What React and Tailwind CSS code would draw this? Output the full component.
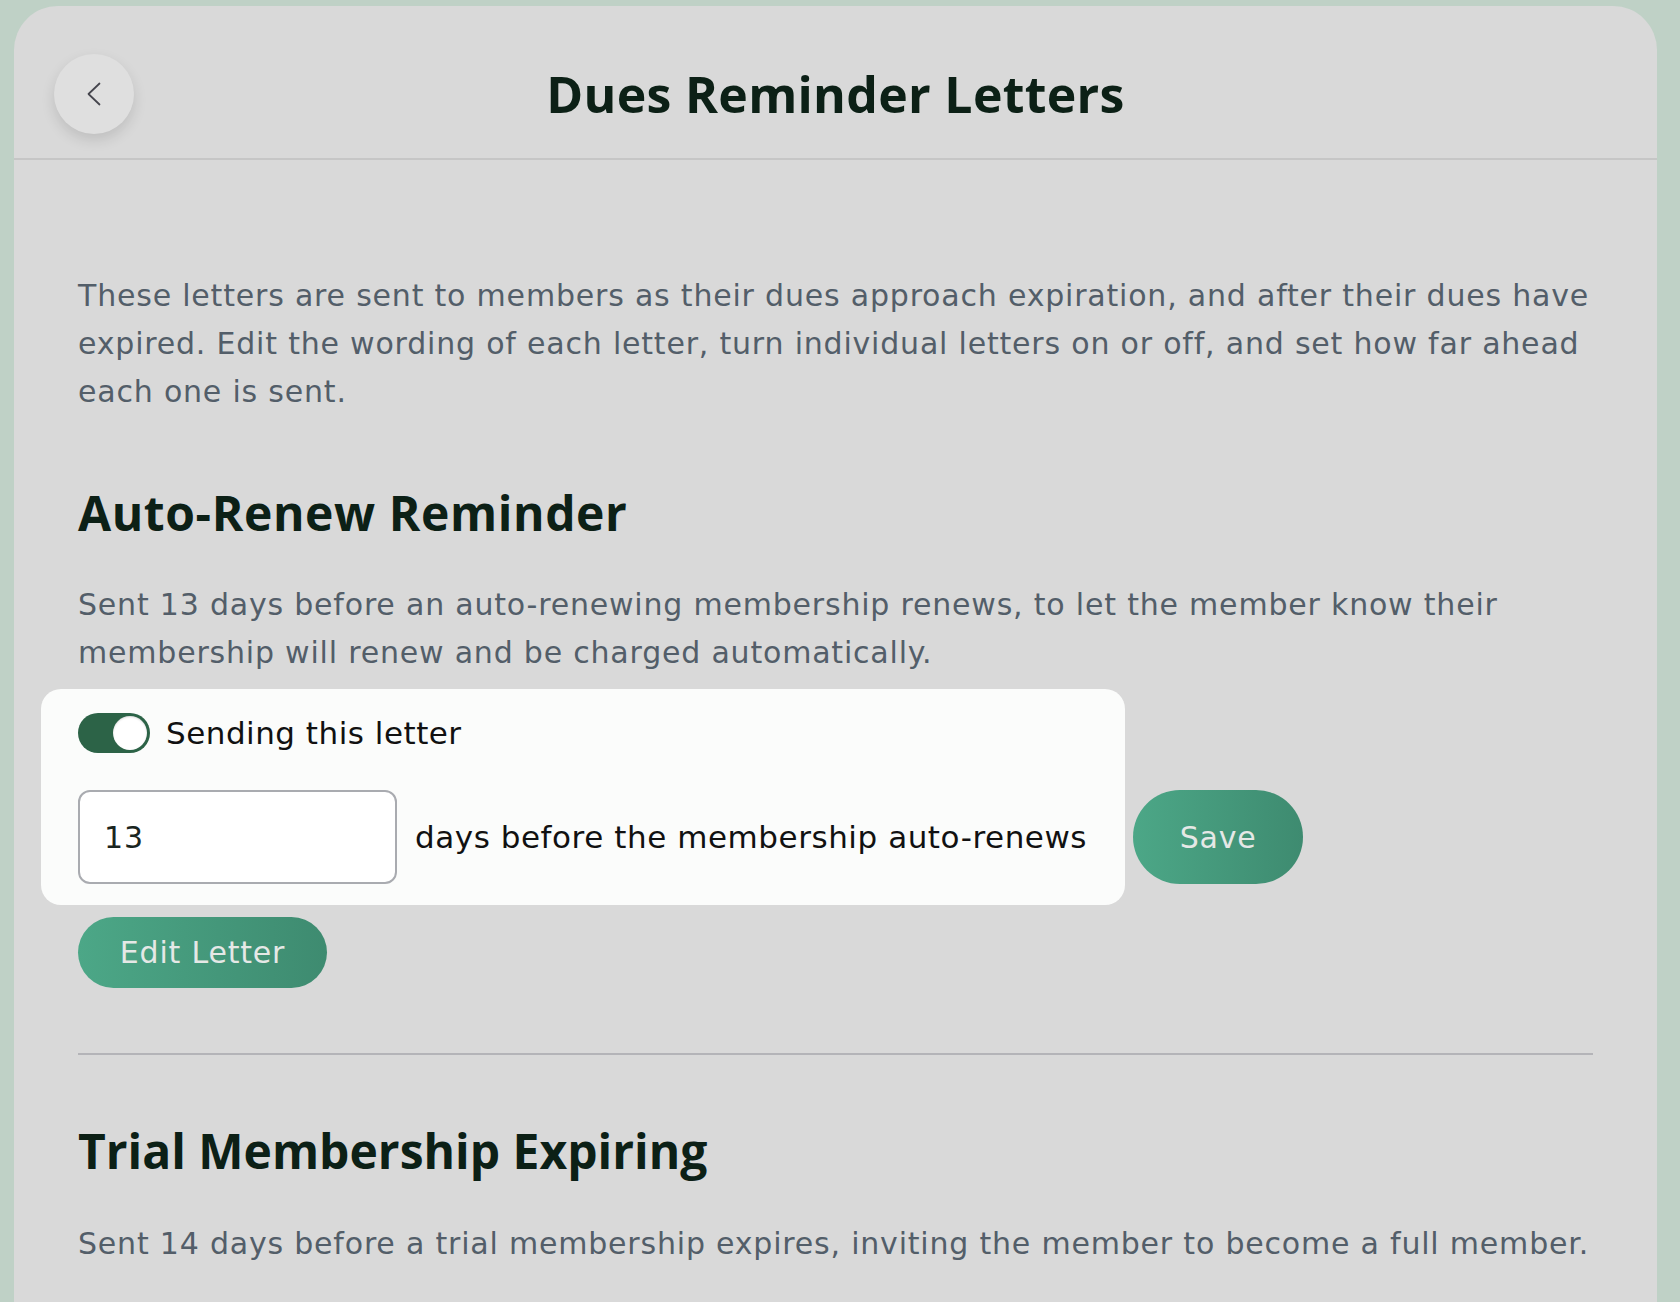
import { useState } from "react";

function Toggle({ on, onChange }) {
    return (
        <button
            type="button"
            onClick={() => onChange(!on)}
            className={`flex h-[40px] w-[72px] items-center rounded-full p-[3px] ${on ? "justify-end bg-[#2c6347]" : "justify-start bg-[#a9abb0]"}`}
        >
            <span className="h-[34px] w-[34px] rounded-full bg-white shadow-[inset_0_1px_2px_rgba(0,0,0,0.15)]" />
        </button>
    );
}

const body = "[font-family:'DejaVu_Sans',sans-serif] tracking-[0.8px]";
const head = "[font-family:'Open_Sans',sans-serif] font-bold text-[#0c2016]";

export default function App() {
    const [sending, setSending] = useState(true);
    const [days, setDays] = useState("13");

    return (
        <div className="min-h-screen bg-[#bfd1c6] pl-[14px] pt-[6px]">
            <div className="min-h-[1296px] w-[1643px] rounded-t-[44px] bg-[#d9d9d9]">
                <header className="grid grid-cols-[80px_1fr_80px] items-center border-b-2 border-[#c6c6c6] px-[40px] pb-[24px] pt-[48px]">
                    <button type="button" className="flex h-[80px] w-[80px] items-center justify-center rounded-full bg-[#dfdfdf] shadow-[0_6px_14px_rgba(0,0,0,0.12)]">
                        <svg width="14" height="24" viewBox="0 0 14 24" fill="none" stroke="#45454d" strokeWidth="1.75" strokeLinecap="round" strokeLinejoin="round">
                            <polyline points="12.5,1.5 1.5,12 12.5,22.5" />
                        </svg>
                    </button>
                    <h1 className={`${head} text-center text-[50px] leading-[60px] tracking-[0.3px]`}>Dues Reminder Letters</h1>
                    <div />
                </header>

                <main className="px-[64px] pt-[112px]">
                    <p className={`${body} text-[30px] leading-[48px] text-[#535e69]`}>
                        These letters are sent to members as their dues approach expiration, and after their dues have expired. Edit the wording of each letter, turn individual letters on or off, and set how far ahead each one is sent.
                    </p>

                    <section>
                        <h2 className={`${head} mt-[68px] text-[48px] leading-[58px] tracking-[0.6px]`}>Auto-Renew Reminder</h2>
                        <p className={`${body} mt-[39px] text-[30px] leading-[48px] text-[#535e69]`}>
                            Sent 13 days before an auto-renewing membership renews, to let the member know their membership will renew and be charged automatically.
                        </p>

                        <div className="mt-[12px] flex items-end gap-[8px]">
                            <div className="-ml-[37px] rounded-[20px] bg-[#fbfcfb] pb-[21px] pl-[37px] pr-[38px] pt-[24px]">
                                <div className="flex items-center gap-[16px]">
                                    <Toggle on={sending} onChange={setSending} />
                                    <span className="[font-family:'DejaVu_Sans',sans-serif] text-[31px] leading-[40px] tracking-[0.5px] text-[#111]">Sending this letter</span>
                                </div>
                                <div className="mt-[37px] flex items-center gap-[18px]">
                                    <input
                                        type="text"
                                        value={days}
                                        onChange={(e) => setDays(e.target.value)}
                                        className={`${body} h-[94px] w-[319px] rounded-[12px] border-2 border-[#a9abb0] bg-white px-[24px] text-[30px] text-[#1a2520] outline-none`}
                                    />
                                    <span className="[font-family:'DejaVu_Sans',sans-serif] text-[31px] tracking-[0.55px] text-[#111]">days before the membership auto-renews</span>
                                </div>
                            </div>
                            <button type="button" className={`${body} mb-[21px] h-[94px] w-[170px] rounded-full bg-gradient-to-r from-[#4ca787] to-[#3e8b70] text-[30px] text-[#e5e8e6]`}>
                                Save
                            </button>
                        </div>

                        <button type="button" className={`${body} mt-[12px] h-[71px] w-[249px] rounded-full bg-gradient-to-r from-[#4ca787] to-[#3e8b70] text-[30px] text-[#e5e8e6]`}>
                            Edit Letter
                        </button>
                    </section>

                    <hr className="mt-[65px] border-t-2 border-[#b4b4b8]" />

                    <section>
                        <h2 className={`${head} mt-[67px] text-[48px] leading-[58px]`}>Trial Membership Expiring</h2>
                        <p className={`${body} mt-[40px] text-[30px] leading-[48px] text-[#535e69]`}>
                            Sent 14 days before a trial membership expires, inviting the member to become a full member.
                        </p>
                    </section>
                </main>
            </div>
        </div>
    );
}
